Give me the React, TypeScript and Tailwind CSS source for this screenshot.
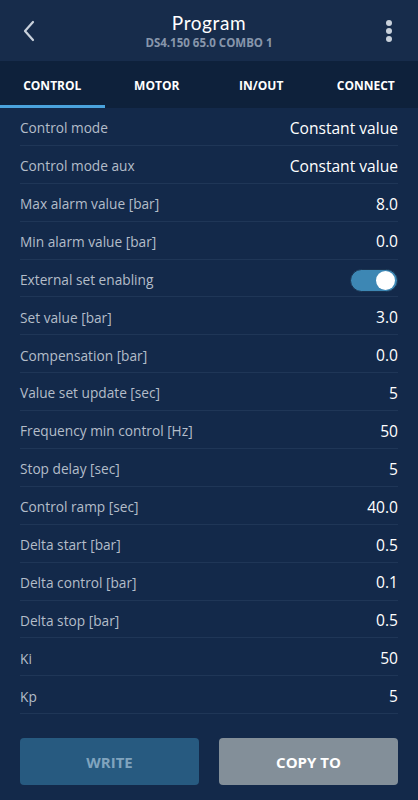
import React from 'react';

const rows: { label: string; value?: string; toggle?: boolean }[] = [
  { label: 'Control mode', value: 'Constant value' },
  { label: 'Control mode aux', value: 'Constant value' },
  { label: 'Max alarm value [bar]', value: '8.0' },
  { label: 'Min alarm value [bar]', value: '0.0' },
  { label: 'External set enabling', toggle: true },
  { label: 'Set value [bar]', value: '3.0' },
  { label: 'Compensation [bar]', value: '0.0' },
  { label: 'Value set update [sec]', value: '5' },
  { label: 'Frequency min control [Hz]', value: '50' },
  { label: 'Stop delay [sec]', value: '5' },
  { label: 'Control ramp [sec]', value: '40.0' },
  { label: 'Delta start [bar]', value: '0.5' },
  { label: 'Delta control [bar]', value: '0.1' },
  { label: 'Delta stop [bar]', value: '0.5' },
  { label: 'Ki', value: '50' },
  { label: 'Kp', value: '5' },
];

const tabs = ['CONTROL', 'MOTOR', 'IN/OUT', 'CONNECT'];

function Header() {
  return (
    <div className="flex items-center h-[61px] bg-[#172c4b] px-[20px]">
      <svg width="18" height="24" viewBox="0 0 18 24" className="shrink-0">
        <path d="M13 3 L5 12 L13 21" fill="none" stroke="#c9d1db" strokeWidth="2.2" strokeLinecap="round" strokeLinejoin="round" />
      </svg>
      <div className="flex-1 flex flex-col items-center pt-[1px]">
        <p className="text-[19px] leading-[23px] text-white font-['Lato',_'Open_Sans',_sans-serif] tracking-[0.6px]">Program</p>
        <p className="text-[11.5px] leading-[17px] font-bold text-[#8796ab]">DS4.150 65.0 COMBO 1</p>
      </div>
      <div className="flex flex-col gap-[2px] items-center w-[18px] shrink-0">
        <span className="block size-[6px] rounded-full bg-[#c9d1db]" />
        <span className="block size-[6px] rounded-full bg-[#c9d1db]" />
        <span className="block size-[6px] rounded-full bg-[#c9d1db]" />
      </div>
    </div>
  );
}

function Tabs() {
  return (
    <div className="flex h-[47px] bg-[#0e213b]">
      {tabs.map((t, i) => (
        <div key={t} className="relative flex-1 flex items-center justify-center pt-[2px]">
          <span className="text-[12px] font-bold text-white">{t}</span>
          {i === 0 && <span className="absolute left-0 right-0 bottom-0 h-[3px] bg-[#4aa3dd]" />}
        </div>
      ))}
    </div>
  );
}

function Toggle() {
  return (
    <div className="flex items-center justify-end w-[48px] h-[23px] rounded-full bg-[#3d87b4] border border-[#1a3350] px-[2px]">
      <span className="block size-[19px] rounded-full bg-white" />
    </div>
  );
}

export default function App() {
  return (
    <div className="w-[418px] h-[800px] bg-[#13294a] flex flex-col font-['Open_Sans',_'Noto_Sans',_sans-serif]">
      <Header />
      <Tabs />
      <div className="flex flex-col px-[20px]">
        {rows.map((r) => (
          <div key={r.label} className="flex items-center justify-between h-[37.9px] border-b border-[#1f3657] pt-[4px]">
            <span className="text-[13.7px] text-[#b4bdc9]">{r.label}</span>
            {r.toggle ? <Toggle /> : <span className="text-[15.6px] text-white">{r.value}</span>}
          </div>
        ))}
      </div>
      <div className="flex gap-[20px] px-[20px] pt-[24px]">
        <button className="flex-1 h-[47px] rounded-[4px] bg-[#275a80] text-[15px] font-bold text-[#80a4be]">WRITE</button>
        <button className="flex-1 h-[47px] rounded-[4px] bg-[#838f99] text-[15px] font-bold text-white">COPY TO</button>
      </div>
    </div>
  );
}
